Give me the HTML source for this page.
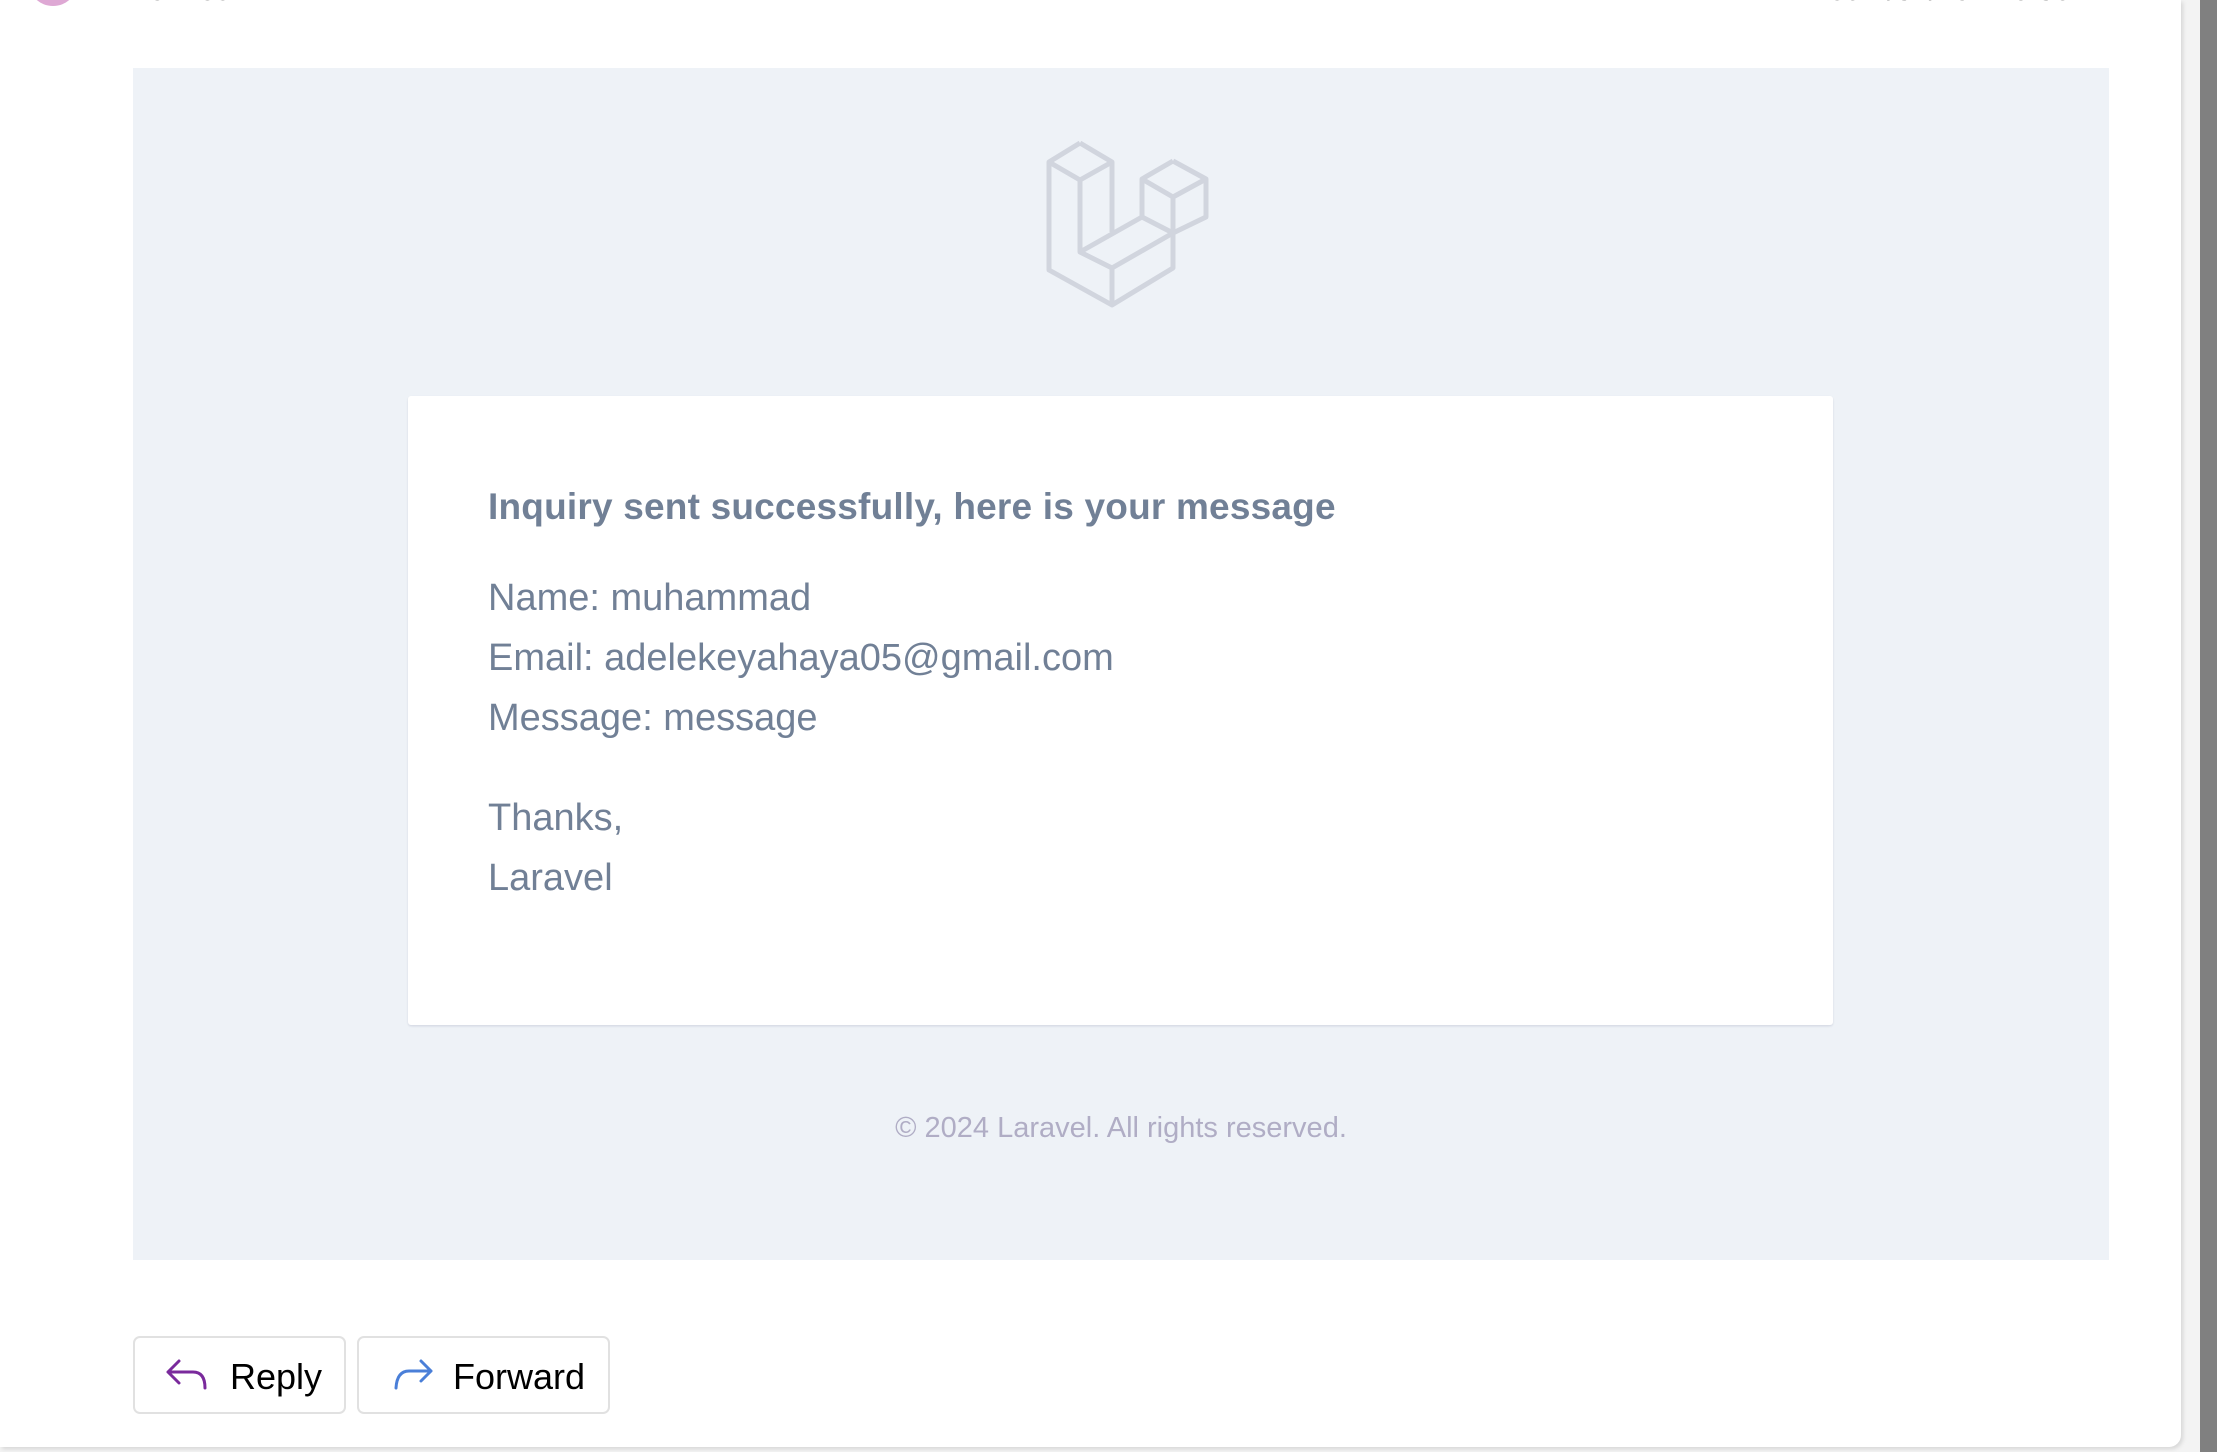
<!DOCTYPE html>
<html><head><meta charset="utf-8"><style>
body{margin:0;width:2217px;height:1452px;background:#f3f3f3;position:relative;overflow:hidden;font-family:"Liberation Sans",sans-serif}
.panel{position:absolute;left:0;top:0;width:2181px;height:1447px;background:#fff;border-radius:0 0 12px 0;box-shadow:2px 2px 4px rgba(0,0,0,.12)}
.scroll{position:absolute;left:2200px;top:0;width:17px;height:1452px;background:#808080}
.gray{position:absolute;left:133px;top:68px;width:1976px;height:1192px;background:#eef2f7}
.card{position:absolute;left:408px;top:396px;width:1425px;height:629px;background:#fff;border-radius:3px;box-shadow:0 2px 2px rgba(0,0,150,.03),0 1px 2px rgba(0,0,0,.08)}
.t{position:absolute;left:488px;color:#718096;white-space:nowrap}
.h{font-weight:bold;font-size:37px;letter-spacing:0.2px}
.b{font-size:38px;letter-spacing:0px}
.foot{position:absolute;left:133px;width:1976px;top:1112px;text-align:center;color:#b0adc5;font-size:29px}
.btn{position:absolute;top:1336px;height:78px;border:2px solid #e1e1e1;border-radius:7px;box-sizing:border-box;font-size:36px;color:#000}
.btn span{position:absolute;top:18px}
</style></head><body>
<div class="panel"></div>
<div class="scroll"></div>
<div style="position:absolute;left:28px;top:-44px;width:50px;height:50px;border-radius:50%;background:#dea8d4"></div>
<div style="position:absolute;left:134px;top:-26px;font-size:30px;color:#333">To: You</div>
<div style="position:absolute;right:93px;top:-26px;font-size:30px;color:#333">Wed 1/31/2024 6:36 PM</div>
<div class="gray"></div>
<svg style="position:absolute;left:1000px;top:120px" width="250" height="210" viewBox="0 0 250 210" fill="none" stroke="#d1d5de" stroke-width="5" stroke-linejoin="round">
<path d="M80 23 L49 42 L49 150 L112 185 L173 148 L173 113 L142 97 M112 112 L112 42 L80 23"/>
<path d="M49 42 L80 60 L112 42 M80 60 L80 132 L112 148 L173 113 M112 148 L112 185"/>
<path d="M80 132 L142 97"/>
<path d="M173 41 L142 59 L142 97 M173 41 L206 59 L206 97 L173 113 M142 59 L173 77 L206 59 M173 77 L173 113"/>
</svg>
<div class="card"></div>
<div class="t h" style="top:486px">Inquiry sent successfully, here is your message</div>
<div class="t b" style="top:577px">Name: muhammad</div>
<div class="t b" style="top:637px">Email: adelekeyahaya05@gmail.com</div>
<div class="t b" style="top:697px">Message: message</div>
<div class="t b" style="top:797px">Thanks,</div>
<div class="t b" style="top:857px">Laravel</div>
<div class="foot">© 2024 Laravel. All rights reserved.</div>
<div class="btn" style="left:133px;width:213px">
<svg style="position:absolute;left:30px;top:20px" width="46" height="36" viewBox="0 0 46 36" fill="none" stroke="#7a2a9c" stroke-width="3" stroke-linecap="round" stroke-linejoin="round"><path d="M14 3 L3 14 L14 25 M3 14 H28 Q40 14 40 30"/></svg>
<span style="left:95px">Reply</span></div>
<div class="btn" style="left:357px;width:253px">
<svg style="position:absolute;left:32px;top:20px" width="46" height="36" viewBox="0 0 46 36" fill="none" stroke="#4a7fd8" stroke-width="3" stroke-linecap="round" stroke-linejoin="round"><path d="M30 3 L40 13 L30 23 M40 13 H18 Q6 13 5 30"/></svg>
<span style="left:94px">Forward</span></div>
</body></html>
